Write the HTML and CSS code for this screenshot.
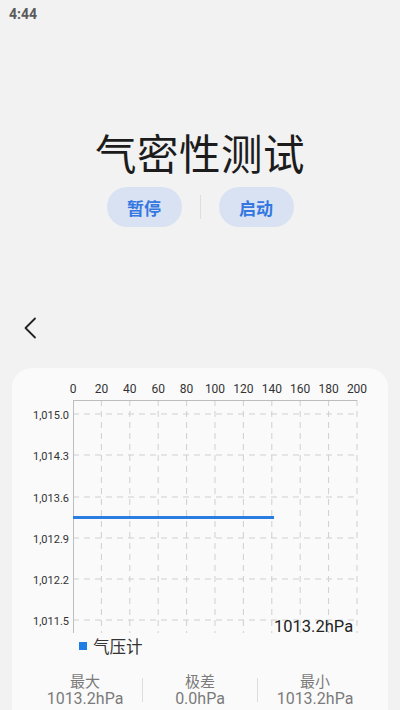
FILE: index.html
```html
<!DOCTYPE html>
<html lang="zh">
<head>
<meta charset="utf-8">
<title>气密性测试</title>
<link rel="stylesheet" href="styles.css">
</head>
<body>
<div class="status">4:44</div>
<div class="hero">
  <h1 class="title">气密性测试</h1>
  <div class="actions">
    <button class="pill">暂停</button>
    <span class="vsep"></span>
    <button class="pill">启动</button>
  </div>
</div>
<div class="backrow">
  <svg class="back" width="14" height="22" viewBox="0 0 14 22"><path d="M12 1.5 L2.5 11 L12 20.5" fill="none" stroke="#222" stroke-width="1.8" stroke-linecap="round" stroke-linejoin="round"/></svg>
</div>
<div class="card">
  <svg class="chart" width="376" height="270" viewBox="0 0 376 270">
    <g class="xlab">
      <text x="61" y="21">0</text>
      <text x="89.4" y="21">20</text>
      <text x="117.8" y="21">40</text>
      <text x="146.2" y="21">60</text>
      <text x="174.6" y="21">80</text>
      <text x="203" y="21">100</text>
      <text x="231.4" y="21">120</text>
      <text x="259.8" y="21">140</text>
      <text x="288.2" y="21">160</text>
      <text x="316.6" y="21">180</text>
      <text x="345" y="21">200</text>
    </g>
    <g class="ylab">
      <text x="57" y="47">1,015.0</text>
      <text x="57" y="88">1,014.3</text>
      <text x="57" y="130">1,013.6</text>
      <text x="57" y="171">1,012.9</text>
      <text x="57" y="212">1,012.2</text>
      <text x="57" y="253">1,011.5</text>
    </g>
    <g class="grid">
      <line x1="61" y1="46" x2="345" y2="46"/>
      <line x1="61" y1="87" x2="345" y2="87"/>
      <line x1="61" y1="129" x2="345" y2="129"/>
      <line x1="61" y1="170" x2="345" y2="170"/>
      <line x1="61" y1="211" x2="345" y2="211"/>
      <line x1="61" y1="252" x2="345" y2="252"/>
      <line x1="89.4" y1="32" x2="89.4" y2="265"/>
      <line x1="117.8" y1="32" x2="117.8" y2="265"/>
      <line x1="146.2" y1="32" x2="146.2" y2="265"/>
      <line x1="174.6" y1="32" x2="174.6" y2="265"/>
      <line x1="203" y1="32" x2="203" y2="265"/>
      <line x1="231.4" y1="32" x2="231.4" y2="265"/>
      <line x1="259.8" y1="32" x2="259.8" y2="265"/>
      <line x1="288.2" y1="32" x2="288.2" y2="265"/>
      <line x1="316.6" y1="32" x2="316.6" y2="265"/>
      <line x1="345" y1="32" x2="345" y2="265"/>
    </g>
    <g class="axis">
      <line x1="61" y1="32.5" x2="345" y2="32.5"/>
      <line x1="61.5" y1="32" x2="61.5" y2="265"/>
    </g>
    <line class="series" x1="61" y1="149.5" x2="262" y2="149.5"/>
    <text class="cur" x="262" y="264">1013.2hPa</text>
  </svg>
  <div class="legend"><span class="swatch"></span><span>气压计</span></div>
  <div class="stats">
    <div class="stat"><div class="lab">最大</div><div class="val">1013.2hPa</div></div>
    <span class="ssep"></span>
    <div class="stat"><div class="lab">极差</div><div class="val">0.0hPa</div></div>
    <span class="ssep"></span>
    <div class="stat"><div class="lab">最小</div><div class="val">1013.2hPa</div></div>
  </div>
</div>
</body>
</html>
```
FILE: styles.css
```css
html, body {
  margin: 0;
  padding: 0;
  background: #f2f2f2;
  font-family: Roboto, "Noto Sans CJK SC", sans-serif;
  overflow: hidden;
  height: 710px;
}
.status {
  height: 28px;
  line-height: 28px;
  padding-left: 9px;
  font-size: 14px;
  font-weight: 700;
  color: #5a5a5a;
}
.hero {
  padding-top: 99px;
  display: flex;
  flex-direction: column;
  align-items: center;
}
.title {
  margin: 0;
  font-family: "Noto Sans CJK SC", sans-serif;
  font-weight: 400;
  font-size: 41.5px;
  line-height: 50px;
  color: #1c1c1c;
  letter-spacing: 0.5px;
}
.actions {
  margin-top: 10px;
  display: flex;
  align-items: center;
  gap: 18px;
}
.pill {
  width: 75px;
  height: 40px;
  border: none;
  border-radius: 20px;
  background: #d9e2f3;
  color: #3577e0;
  font-family: "Noto Sans CJK SC", sans-serif;
  font-weight: 700;
  font-size: 17px;
  padding: 0;
}
.vsep {
  width: 1px;
  height: 24px;
  background: #dedede;
}
.backrow {
  margin-top: 81px;
  height: 40px;
  display: flex;
  align-items: center;
  padding-left: 23px;
}
.card {
  margin: 20px 12px 0;
  background: #fafafa;
  border-radius: 20px 20px 0 0;
  height: 342px;
}
.chart {
  display: block;
}
.xlab text {
  font-family: Roboto, sans-serif;
  font-size: 12px;
  fill: #333;
  text-anchor: middle;
  dominant-baseline: central;
}
.ylab text {
  font-family: Roboto, sans-serif;
  font-size: 11px;
  fill: #333;
  text-anchor: end;
  dominant-baseline: central;
}
.grid line {
  stroke: #cfcfcf;
  stroke-width: 1;
  stroke-dasharray: 6 5;
}
.axis line {
  stroke: #bdbdbd;
  stroke-width: 1;
}
.series {
  stroke: #2a7ee2;
  stroke-width: 3;
}
.cur {
  font-family: Roboto, sans-serif;
  font-size: 16.5px;
  fill: #222;
}
.legend {
  height: 20px;
  margin-top: -2px;
  display: flex;
  align-items: center;
  padding-left: 67px;
  gap: 6px;
  font-family: "Noto Sans CJK SC", sans-serif;
  font-size: 16.5px;
  color: #333;
}
.swatch {
  width: 8px;
  height: 8px;
  background: #1f7de6;
}
.stats {
  margin-top: 16px;
  padding: 0 16px;
  display: flex;
  align-items: center;
}
.stat {
  flex: 1;
  text-align: center;
  color: #7a7a7a;
}
.lab {
  font-family: "Noto Sans CJK SC", sans-serif;
  font-size: 15px;
  line-height: 18px;
}
.val {
  font-size: 16px;
  line-height: 18px;
}
.ssep {
  width: 1px;
  height: 24px;
  background: #dcdcdc;
}
```
